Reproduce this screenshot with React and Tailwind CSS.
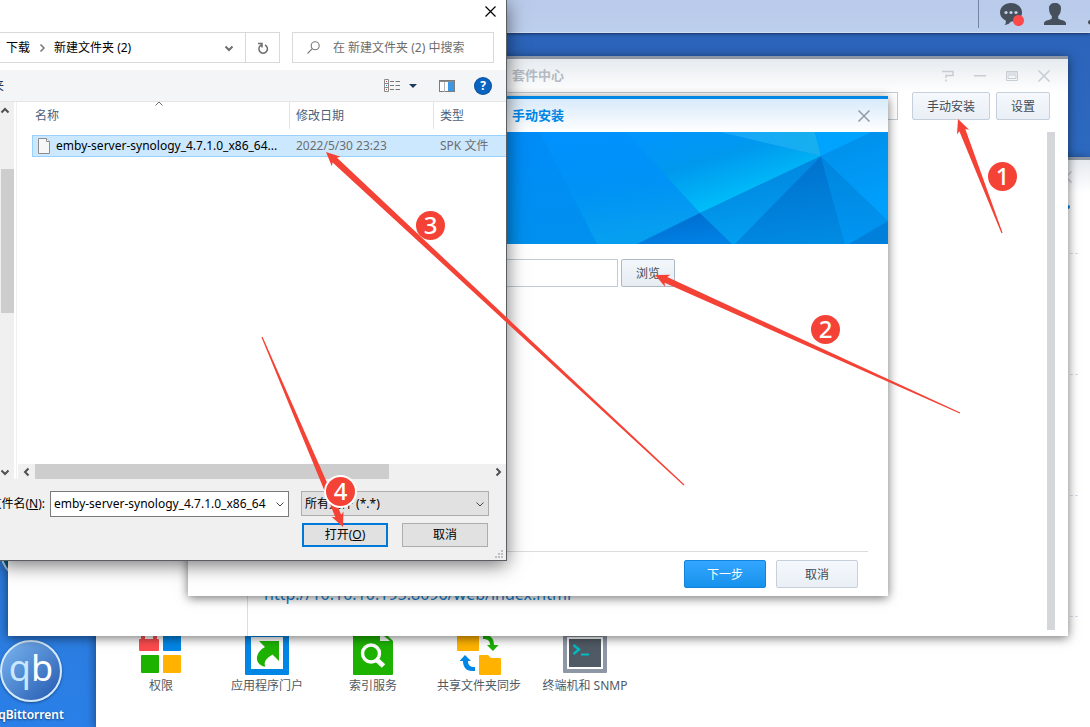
const RED = "#f44336";

/* ---------- annotation overlay ---------- */

function arrowPath([tx, ty], [ex, ey]) {
  const len = Math.hypot(ex - tx, ey - ty);
  const ux = (ex - tx) / len;
  const uy = (ey - ty) / len;
  const at = (along, side) => `${tx + ux * along - uy * side} ${ty + uy * along + ux * side}`;
  return `M${at(0, 0)}L${at(14, 6.5)}L${at(12, 3.2)}L${at(len, 0.6)}L${at(len, -0.6)}L${at(12, -3.2)}L${at(14, -6.5)}Z`;
}

const ARROWS = [
  { tip: [958, 119], tail: [1002, 233] },
  { tip: [655, 275], tail: [960, 413] },
  { tip: [326, 152], tail: [684, 485] },
  { tip: [343, 527], tail: [262, 337] },
];

function Badge({ className, children }) {
  return (
    <span className={`absolute flex size-[29px] items-center justify-center rounded-full bg-[#f44336] pb-[2px] text-2xl font-medium text-white ${className}`}>
      {children}
    </span>
  );
}

function Annotations() {
  return (
    <div className="pointer-events-none absolute inset-0">
      <svg className="absolute top-0 left-0" width="1090" height="727" aria-hidden="true">
        {ARROWS.map((a) => (
          <path key={a.tip.join()} d={arrowPath(a.tip, a.tail)} fill={RED} />
        ))}
      </svg>
      <Badge className="top-[162px] left-[988px]">1</Badge>
      <Badge className="top-[315px] left-[811px]">2</Badge>
      <Badge className="top-[211px] left-[416px]">3</Badge>
      <Badge className="top-[477px] left-[326px] ring-2 ring-white">4</Badge>
    </div>
  );
}

/* ---------- desktop ---------- */

function TopBar() {
  return (
    <header className="relative flex h-[33px] items-start justify-end border-b border-[#d3def2] bg-linear-to-b from-[#b9caea] to-[#bccfec] shadow-[0_1px_3px_rgba(0,0,0,0.5)]">
      <div className="h-7 w-px bg-[#7285a3]" />
      <button type="button" aria-label="通知" className="ml-[21px] h-7 w-6">
        <svg width="24" height="28" viewBox="0 0 24 28">
          <path d="M11 3C4.900 3 0 7 0 12.500c0 3.700 2.200 6.400 5.600 7.900.6 1.800.3 3.200-1 4.600 3-.3 5-1.500 6.500-3.500C17.100 21.500 22 18 22 12.500S17.100 3 11 3Z" fill="#46505d" />
          <circle cx="6" cy="12.500" r="1.600" fill="#c3d0e6" />
          <circle cx="11" cy="12.500" r="1.600" fill="#c3d0e6" />
          <circle cx="16" cy="12.500" r="1.600" fill="#c3d0e6" />
          <circle cx="18.500" cy="20.500" r="5.500" fill="#fc4a4a" />
        </svg>
      </button>
      <button type="button" aria-label="用户" className="ml-5 h-7 w-[22px]">
        <svg width="22" height="28" viewBox="0 0 22 28">
          <path d="M11 3c-3.700 0-6 2-6 5.300 0 3.200.9 6 2.800 7.700v2.400C6.500 20 0 20 0 23.200V25h22v-1.800c0-3.200-6.500-3.200-7.800-4.800V16C16.100 14.300 17 11.500 17 8.300 17 5 14.700 3 11 3Z" fill="#46505d" />
        </svg>
      </button>
      <button type="button" aria-label="搜索" className="ml-[22px] h-7 w-[2px]">
        <svg width="2" height="28" viewBox="0 0 2 28">
          <path d="M2 20C.800 20 0 21 0 22.300 0 23.500.800 24.400 2 24.400Z" fill="#46505d" />
        </svg>
      </button>
    </header>
  );
}

function DesktopIcons() {
  return (
    <div className="absolute top-[520px] left-0 w-[62px]">
      <div className="size-[62px] rounded-full border-2 border-[#d5e9fa] bg-[#0a6f9f]" />
      <a href="#qbittorrent" className="mt-[58px] flex w-[62px] flex-col items-center">
        <span className="flex size-[62px] shrink-0 items-center justify-center rounded-full border-2 border-[#d5e9fa] bg-linear-to-br from-[#7db6f0] to-[#2459b0] pb-[6px] text-4xl text-white shadow-[0_1px_3px_rgba(0,0,0,0.4)]">
          <span className="text-[#c8e8ff]">q</span>b
        </span>
        <span className="mt-[5px] text-xs font-semibold text-white [text-shadow:0_1px_2px_rgba(0,0,0,0.5)]">qBittorrent</span>
      </a>
    </div>
  );
}

/* ---------- control panel window ---------- */

function PrivilegeIcon() {
  return (
    <svg width="48" height="48" viewBox="0 0 48 48">
      <path d="M4 1h16v11h-4V4H8v8H4Z" fill="#fb5050" />
      <rect x="2" y="11" width="20" height="12" rx="1" fill="#fb4b4e" />
      <rect x="26" y="3" width="18" height="20" rx="1" fill="#0086e5" />
      <rect x="4" y="27" width="18" height="18" rx="1" fill="#1db100" />
      <rect x="26" y="27" width="18" height="18" rx="1" fill="#ffb200" />
    </svg>
  );
}

function PortalIcon() {
  return (
    <svg width="48" height="48" viewBox="0 0 48 48">
      <rect x="2" y="3" width="44" height="44" rx="1" fill="#0086e5" />
      <rect x="8" y="9" width="32" height="32" fill="#fff" />
      <path d="M16 13h20v20l-6.500-6.500c-6 4-9.500 7-7 12.300C15.500 38 12.500 32 14.500 27c1.200-3.500 4-6 7.500-8Z" fill="#1db100" />
    </svg>
  );
}

function IndexIcon() {
  return (
    <svg width="48" height="48" viewBox="0 0 48 48">
      <path d="M5 1h26v12h13v33a1 1 0 0 1-1 1H5a1 1 0 0 1-1-1V2Z" fill="#1db100" />
      <path d="M34 6l7 7h-7Z" fill="#fff" />
      <path d="M37 6l7 7h-3l-6-5Z" fill="#1db100" />
      <circle cx="22" cy="25.500" r="8.500" fill="none" stroke="#fff" strokeWidth="3.400" />
      <path d="M28 32l6.500 6" stroke="#fff" strokeWidth="5" />
    </svg>
  );
}

function SyncIcon() {
  return (
    <svg width="48" height="48" viewBox="0 0 48 48">
      <path d="M2 4h22v18a1 1 0 0 1-1 1H3a1 1 0 0 1-1-1Z" fill="#ffb200" />
      <path d="M24 28a1 1 0 0 1 1-1h8l3 3h9a1 1 0 0 1 1 1v15a1 1 0 0 1-1 1H25a1 1 0 0 1-1-1Z" fill="#ffb200" />
      <path d="M28 7h2c5 0 9 3 9 10h4.500L38 23l-6-6h3c0-4-2-6-7-6Z" fill="#1db100" />
      <path d="M20 43h-3c-6 0-9-4-9-10H4.500L10 27l6 6h-3c0 4 2 6 7 6Z" fill="#0086e5" />
    </svg>
  );
}

function TerminalIcon() {
  return (
    <svg width="48" height="48" viewBox="0 0 48 48">
      <rect x="2" y="3" width="44" height="42" rx="1" fill="#8d97a5" />
      <rect x="6" y="9" width="36" height="32" fill="#fff" />
      <rect x="8" y="11" width="32" height="28" fill="#505a64" />
      <path d="M12.500 17l5.500 4.500-5.500 4.500" fill="none" stroke="#00bcc4" strokeWidth="2.400" />
      <path d="M20 26.500h8" stroke="#00bcc4" strokeWidth="2" />
    </svg>
  );
}

const SERVICES = [
  ["权限", PrivilegeIcon],
  ["应用程序门户", PortalIcon],
  ["索引服务", IndexIcon],
  ["共享文件夹同步", SyncIcon],
  ["终端机和 SNMP", TerminalIcon],
];

function CloseGlyph() {
  return (
    <svg className="block" width="12" height="12" viewBox="0 0 12 12" fill="none" stroke="currentColor" strokeWidth="1.500">
      <path d="M.5.5l11 11M11.500.5l-11 11" />
    </svg>
  );
}

function ControlPanel() {
  return (
    <section className="absolute top-[157px] right-0 bottom-0 left-24 flex flex-col overflow-hidden border-t-[3px] border-[#8d97a3] bg-white shadow-[0_2px_10px_rgba(0,0,0,0.5)]">
      <div className="flex h-[33px] shrink-0 items-center justify-end bg-linear-to-b from-[#e6eaef] to-white pr-[18px] text-[#c3c8cf]">
        <button type="button" aria-label="关闭"><CloseGlyph /></button>
      </div>
      <div className="flex h-7 shrink-0 items-center justify-end pr-5">
        <span className="size-1 rounded-full bg-[#0086e5]" />
      </div>
      <div className="mr-3 ml-3 flex shrink-0 flex-col">
        <div className="h-[33px] border-b border-dashed border-[#d9dde2]" />
        <div className="h-[121px] border-b border-dashed border-[#d5dff0]" />
        <div className="h-[121px] border-b border-dashed border-[#d5dff0]" />
        <div className="h-[121px] border-b border-dashed border-[#d5dff0]" />
      </div>
      <nav className="mt-[11px] ml-3 flex">
        {SERVICES.map(([name, Icon]) => (
          <a key={name} href={`#${name}`} className="flex w-[106px] shrink-0 flex-col items-center text-xs leading-[20px] whitespace-nowrap text-[#505a64]">
            <Icon />
            {name}
          </a>
        ))}
      </nav>
    </section>
  );
}

/* ---------- package center window ---------- */

const dsmButton =
  "h-7 rounded-xs border border-[#c5d0dc] bg-linear-to-b from-[#f5f9fe] to-[#eaeff5] pt-[2px] text-xs text-[#414b55]";

function PackageCenter() {
  return (
    <section className="absolute top-14 right-[22px] left-2 flex h-[580px] flex-col border-t-[3px] border-[#8d97a3] bg-white shadow-[0_2px_10px_rgba(0,0,0,0.55)]">
      <div className="grid h-[33px] grid-cols-[1fr_auto_1fr] items-center bg-linear-to-b from-[#e6eaef] to-white">
        <span />
        <h2 className="text-[13px] font-bold text-[#b3bac2]">套件中心</h2>
        <div className="flex items-center justify-end gap-5 pr-[18px] text-[#c8cdd3]">
          <button type="button" aria-label="帮助">
            <svg className="block" width="12" height="12" viewBox="0 0 12 12" fill="none" stroke="currentColor" strokeWidth="1.500">
              <path d="M0 1.500h11v4H4V8M4 9.500v2" />
            </svg>
          </button>
          <button type="button" aria-label="最小化">
            <svg className="block" width="12" height="12" viewBox="0 0 12 12"><path d="M0 5h12v1.500H0Z" fill="currentColor" /></svg>
          </button>
          <button type="button" aria-label="最大化">
            <svg className="block" width="12" height="12" viewBox="0 0 12 12" fill="none" stroke="currentColor">
              <path d="M.5 1.500h11v9H.5ZM0 3h12M2 5h8v3.500H2Z" />
            </svg>
          </button>
          <button type="button" aria-label="关闭"><CloseGlyph /></button>
        </div>
      </div>
      <div className="flex min-h-0 flex-1">
        <nav className="w-60 shrink-0 border-r border-[#d9dde2]" aria-label="套件分类" />
        <div className="flex flex-1 flex-col">
          <div className="flex pr-[18px] pl-4">
            <input aria-label="搜索套件" className="h-7 min-w-0 flex-1 border border-[#c0cad6] bg-white px-2 text-xs" />
            <button type="button" className={`${dsmButton} ml-[14px] w-[78px]`}>手动安装</button>
            <button type="button" className={`${dsmButton} ml-[6px] w-[54px]`}>设置</button>
          </div>
          <div className="mt-3 flex flex-1 pr-[13px]">
            <div className="flex flex-1 flex-col justify-end pb-[30px] pl-4">
              <a href="http://10.10.10.195:8096/web/index.html" className="text-base leading-6 text-[#0f7fd0]">
                http://10.10.10.195:8096/web/index.html
              </a>
            </div>
            <div className="mb-[6px] w-2 bg-[#d4d6d9]" />
          </div>
        </div>
      </div>
    </section>
  );
}

/* ---------- manual install dialog ---------- */

function Banner() {
  return (
    <svg className="block h-28 w-full" viewBox="0 0 700 112" preserveAspectRatio="none" aria-hidden="true">
      <defs>
        <linearGradient id="bn-b" x1="0" y1="0" x2="0.2" y2="1"><stop offset="0" stopColor="#0091ff" /><stop offset="0.550" stopColor="#0092f5" /><stop offset="1" stopColor="#069ff0" /></linearGradient>
        <linearGradient id="bn-a" x1="0" y1="0" x2="0" y2="1"><stop offset="0" stopColor="#008cf8" /><stop offset="1" stopColor="#0090ee" /></linearGradient>
        <linearGradient id="bn-c" gradientUnits="userSpaceOnUse" x1="500" y1="-5" x2="525" y2="75"><stop offset="0" stopColor="#0096fb" /><stop offset="0.450" stopColor="#0099ee" /><stop offset="1" stopColor="#00bdf9" /></linearGradient>
        <linearGradient id="bn-d" x1="0" y1="0" x2="1" y2="0"><stop offset="0" stopColor="#18a6fb" /><stop offset="1" stopColor="#17b0ee" /></linearGradient>
        <linearGradient id="bn-f" x1="0" y1="0" x2="0.500" y2="1"><stop offset="0" stopColor="#0069cc" /><stop offset="1" stopColor="#0080e3" /></linearGradient>
        <linearGradient id="bn-g" x1="0.400" y1="0.200" x2="0.600" y2="1"><stop offset="0" stopColor="#0088e0" /><stop offset="1" stopColor="#03a2f2" /></linearGradient>
        <linearGradient id="bn-h" x1="0.400" y1="0" x2="0.600" y2="1"><stop offset="0" stopColor="#0070cc" /><stop offset="1" stopColor="#008ae2" /></linearGradient>
        <linearGradient id="bn-i" x1="0" y1="0" x2="0" y2="1"><stop offset="0" stopColor="#0085dd" /><stop offset="1" stopColor="#0096f2" /></linearGradient>
        <linearGradient id="bn-j" x1="0" y1="0" x2="0.300" y2="1"><stop offset="0" stopColor="#008ee8" /><stop offset="1" stopColor="#009ffc" /></linearGradient>
      </defs>
      <rect width="700" height="112" fill="#0092f4" />
      <path d="M0 0H352L409 112H0Z" fill="url(#bn-a)" />
      <path d="M352 0H439L512 81L449 112H409Z" fill="url(#bn-b)" />
      <path d="M438 0H532L633 24L512 81Z" fill="url(#bn-c)" />
      <path d="M532 0H627L633 24Z" fill="url(#bn-d)" />
      <path d="M627 0H684L633 24Z" fill="#00a4ff" />
      <path d="M512 81L449 112H545Z" fill="url(#bn-f)" />
      <path d="M512 81L633 24L547 112H544Z" fill="url(#bn-g)" />
      <path d="M633 24L547 112H657Z" fill="url(#bn-h)" />
      <path d="M633 24L657 112H661L700 89Z" fill="url(#bn-i)" />
      <path d="M633 24L684 0H700V89Z" fill="url(#bn-j)" />
      <path d="M700 89L661 112H700Z" fill="#0080da" />
    </svg>
  );
}

function InstallDialog() {
  return (
    <section role="dialog" aria-label="手动安装" className="absolute top-24 left-[188px] flex h-[500px] w-[700px] flex-col border-t-[3px] border-[#0086e5] bg-white shadow-[0_2px_10px_rgba(0,0,0,0.55)]">
      <div className="grid h-[33px] shrink-0 grid-cols-[1fr_auto_1fr] items-center bg-linear-to-b from-[#d8eafa] to-white">
        <span />
        <h2 className="text-[13px] font-bold text-[#0086e5]">手动安装</h2>
        <button type="button" aria-label="关闭" className="mr-[18px] justify-self-end text-[#8f99a5]"><CloseGlyph /></button>
      </div>
      <Banner />
      <div className="mt-[15px] flex justify-end gap-[3px] pr-[213px]">
        <input aria-label="文件" className="h-7 w-[270px] border border-[#c0cad6] bg-white px-2 text-xs" />
        <button type="button" className="h-7 w-[54px] rounded-xs border border-[#aeb9c6] bg-linear-to-b from-[#f3f7fc] to-[#e6ecf2] pt-[2px] text-xs text-[#414b55]">浏览</button>
      </div>
      <footer className="mx-5 mt-auto mb-2 flex justify-end gap-[10px] border-t border-[#dcdcdc] pt-2 pr-[10px]">
        <button type="button" className="h-7 w-[82px] rounded-xs border border-[#1183dc] bg-linear-to-b from-[#33a6ff] to-[#1492ec] pt-[2px] text-xs text-white">下一步</button>
        <button type="button" className={`${dsmButton} w-[82px]`}>取消</button>
      </footer>
    </section>
  );
}

/* ---------- file picker ---------- */

const CHEVRONS = {
  up: "M1.500 6.500L5 3L8.500 6.500",
  down: "M1.500 3.500L5 7L8.500 3.500",
  left: "M6.500 1.500L3 5L6.500 8.500",
  right: "M3.500 1.500L7 5L3.500 8.500",
};

function Chevron({ dir, width = 2 }) {
  return (
    <svg className="shrink-0" width="10" height="10" viewBox="0 0 10 10" fill="none" stroke="currentColor" strokeWidth={width}>
      <path d={CHEVRONS[dir]} />
    </svg>
  );
}

function PickerToolbar() {
  return (
    <div className="flex h-8 items-center border-b border-[#e5e5e5] bg-[#f4f5f7]">
      <div className="flex w-1 justify-end overflow-hidden text-xs whitespace-nowrap text-[#1e395b]">
        <button type="button">新建文件夹</button>
      </div>
      <div className="ml-auto flex items-center pr-[15px]">
        <button type="button" aria-label="更改视图" className="flex items-center gap-[9px]">
          <svg width="16" height="13" viewBox="0 0 16 13">
            <path d="M.5.5h4v12h-4ZM.5 4.500h4M.5 8.500h4" fill="#fff" stroke="#8b8b8b" />
            <path d="M2 2h1v1H2ZM2 10h1v1H2Z" fill="#d03c3c" />
            <path d="M2 6h1v1H2Z" fill="#3a78c8" />
            <path d="M6 2.500h4M11.500 2.500H16M6 6.500h4M11.500 6.500H16M6 10.500h4M11.500 10.500H16" stroke="#777" />
          </svg>
          <svg width="8" height="4" viewBox="0 0 8 4"><path d="M0 0h8L4 4Z" fill="#1e395b" /></svg>
        </button>
        <button type="button" aria-label="预览窗格" className="ml-[22px]">
          <svg className="block" width="16" height="12" viewBox="0 0 16 12">
            <rect x=".5" y=".5" width="15" height="11" fill="#fff" stroke="#7c7c7c" />
            <path d="M1 1.500h14" stroke="#8b8b8b" />
            <path d="M5.500 2v10" stroke="#b5b5b5" />
            <rect x="9" y="2" width="6" height="9" fill="#3b97e3" />
          </svg>
        </button>
        <button type="button" aria-label="帮助" className="ml-5 flex size-4 items-center justify-center rounded-full bg-[#0a63c0] text-xs font-bold text-white ring-1 ring-[#084f9a]">?</button>
      </div>
    </div>
  );
}

function FileList() {
  return (
    <div className="flex h-[377px] bg-white">
      <div className="flex w-[14px] shrink-0 flex-col items-end bg-[#f0f0f0] text-[#505050]">
        <div className="flex h-[17px] w-[14px] items-center"><Chevron dir="up" /></div>
        <div className="mt-[50px] h-36 w-[13px] bg-[#cdcdcd]" />
        <div className="mt-auto flex h-[15px] w-[14px] items-center"><Chevron dir="down" /></div>
      </div>
      <div className="ml-[2px] flex min-w-0 flex-1 flex-col border-l border-[#f0f0f0]">
        <div className="relative ml-[15px]">
          <span className="absolute top-0 left-[122px] flex h-1 items-center text-[#6d6d6d]"><Chevron dir="up" width={1} /></span>
          <table className="w-full table-fixed border-separate border-spacing-0 text-left text-xs">
            <colgroup>
              <col className="w-[258px]" />
              <col className="w-36" />
              <col />
            </colgroup>
            <thead className="text-[#4c607a]">
              <tr>
                <th className="px-0 pt-0 pb-[6px] font-normal"><div className="flex h-[27px] items-center border-r border-[#e5e5e5] pl-[3px]">名称</div></th>
                <th className="px-0 pt-0 pb-[6px] font-normal"><div className="flex h-[27px] items-center border-r border-[#e5e5e5] pl-[6px]">修改日期</div></th>
                <th className="px-0 pt-0 pb-[6px] font-normal"><div className="flex h-[27px] items-center pl-[6px]">类型</div></th>
              </tr>
            </thead>
            <tbody className="bg-[#cce8ff] whitespace-nowrap text-[#6d6d6d]">
              <tr>
                <td className="h-[22px] border-y border-l border-[#99d1ff] p-0 text-black">
                  <div className="flex items-center gap-[6px] pl-[5px]">
                    <svg className="shrink-0" width="12" height="16" viewBox="0 0 12 16">
                      <path d="M.5.5h8l3 3v12H.5Z" fill="#f7f7f7" stroke="#8d8d8d" />
                      <path d="M8.500.5v3h3" fill="#fff" stroke="#8d8d8d" />
                    </svg>
                    emby-server-synology_4.7.1.0_x86_64...
                  </div>
                </td>
                <td className="h-[22px] border-y border-[#99d1ff] p-0 pl-[6px]">2022/5/30 23:23</td>
                <td className="h-[22px] border-y border-[#99d1ff] p-0 pl-[6px]">SPK 文件</td>
              </tr>
            </tbody>
          </table>
        </div>
        <div className="mt-auto ml-px flex h-[15px] items-center justify-between bg-[#f0f0f0] text-[#505050]">
          <div className="flex h-full w-[17px] items-center justify-center"><Chevron dir="left" /></div>
          <div className="h-full w-[354px] bg-[#cdcdcd]" />
          <div className="ml-auto flex h-full w-[17px] items-center justify-center"><Chevron dir="right" /></div>
        </div>
      </div>
    </div>
  );
}

function FilePicker() {
  return (
    <section role="dialog" aria-label="打开" className="absolute top-0 left-0 w-[507px] border-r border-b border-[#5a5d61] bg-[#f0f0f0] shadow-[0_4px_18px_rgba(0,0,0,0.55)]">
      <div className="bg-white">
        <div className="flex h-8 items-start justify-end pt-[6px] pr-[10px]">
          <button type="button" aria-label="关闭">
            <svg className="block" width="11" height="11" viewBox="0 0 11 11" stroke="#000" strokeWidth="1.200"><path d="M.5.5l10 10M10.500.5l-10 10" /></svg>
          </button>
        </div>
        <div className="flex h-[38px] items-start pr-3 pb-[7px] text-xs">
          <div className="flex h-[31px] w-[280px] border border-l-0 border-[#d9d9d9]">
            <div className="flex flex-1 items-center pl-[6px] text-black">
              <span>下载</span>
              <span className="mx-[7px] flex text-[#777]"><Chevron dir="right" width={1.5} /></span>
              <span>新建文件夹 (2)</span>
            </div>
            <button type="button" aria-label="历史位置" className="mr-[11px] text-[#6d6d6d]"><Chevron dir="down" width={2} /></button>
            <button type="button" aria-label="刷新" className="flex w-[34px] items-center justify-center border-l border-[#d9d9d9]">
              <svg width="12" height="12" viewBox="0 0 12 12" fill="none" stroke="#6d6d6d" strokeWidth="1.500">
                <path d="M4.300 3A4.300 4.300 0 1 0 8 3M1 1.500h4v4" />
              </svg>
            </button>
          </div>
          <label className="ml-3 flex h-[31px] flex-1 items-center border border-[#d9d9d9] pl-[14px]">
            <svg className="shrink-0" width="13" height="13" viewBox="0 0 13 13" fill="none" stroke="#7a7a7a" strokeWidth="1.100">
              <circle cx="8.200" cy="4.800" r="4" /><path d="M5.300 7.700L.5 12.500" />
            </svg>
            <input aria-label="搜索" placeholder="在 新建文件夹 (2) 中搜索" className="ml-[13px] w-full min-w-0 bg-transparent text-xs outline-none placeholder:text-[#6d6d6d]" />
          </label>
        </div>
      </div>
      <PickerToolbar />
      <FileList />
      <div className="flex flex-col gap-[6px] pt-3 pb-[13px] text-xs text-black">
        <div className="flex items-start">
          <label htmlFor="file-name" className="flex h-[26px] w-[45px] shrink-0 items-center justify-end overflow-hidden whitespace-nowrap">
            <span>文件名(<u>N</u>):</span>
          </label>
          <div className="ml-[5px] flex h-[26px] w-[239px] items-center border border-[#7a7a7a] bg-white pr-[3px] pl-[3px] text-[#444]">
            <input id="file-name" defaultValue="emby-server-synology_4.7.1.0_x86_64" className="min-w-0 flex-1 text-xs text-black outline-none" />
            <Chevron dir="down" width={1} />
          </div>
          <div className="relative ml-3 h-[25px] w-[188px]">
            <select aria-label="文件类型" className="h-full w-full appearance-none border border-[#adadad] bg-[#e1e1e1] pl-[3px] text-xs">
              <option>所有文件 (*.*)</option>
            </select>
            <span className="pointer-events-none absolute inset-y-0 right-1 flex items-center text-[#444]"><Chevron dir="down" width={1} /></span>
          </div>
        </div>
        <div className="flex justify-end gap-[14px] pr-[18px]">
          <button type="button" className="h-6 w-[86px] border-2 border-[#0078d7] bg-[#e1e1e1]">打开(<u>O</u>)</button>
          <button type="button" className="h-6 w-[86px] border border-[#adadad] bg-[#e1e1e1]">取消</button>
        </div>
      </div>
      <svg className="absolute right-[3px] bottom-[2px]" width="8" height="8" viewBox="0 0 8 8" fill="#bfbfbf" aria-hidden="true">
        <path d="M6 0h2v2H6ZM3 3h2v2H3ZM6 3h2v2H6ZM0 6h2v2H0ZM3 6h2v2H3ZM6 6h2v2H6Z" />
      </svg>
    </section>
  );
}

export default function App() {
  return (
    <main className="relative min-h-screen w-full overflow-hidden bg-linear-to-b from-[#2c62b8] via-[#2e73cb] to-[#2a80e8] font-['Noto_Sans','Noto_Sans_CJK_SC',sans-serif]">
      <TopBar />
      <DesktopIcons />
      <ControlPanel />
      <PackageCenter />
      <InstallDialog />
      <FilePicker />
      <Annotations />
    </main>
  );
}
